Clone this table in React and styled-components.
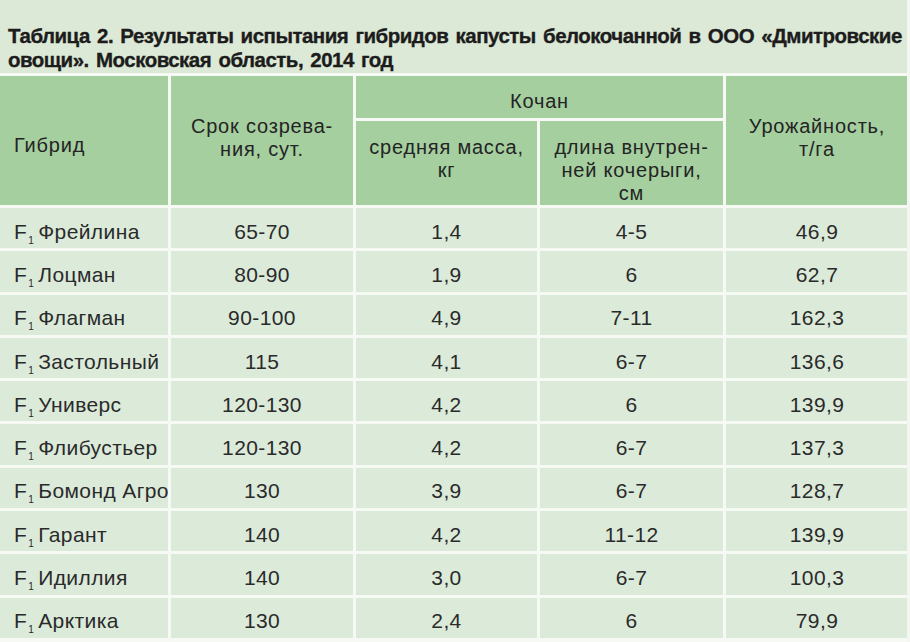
import React, { useLayoutEffect, useRef, useState } from "react";
import styled, { createGlobalStyle } from "styled-components";

const GlobalStyle = createGlobalStyle`
  html, body {
    margin: 0;
    padding: 0;
    background: #f3f6f1;
  }
  body {
    font-family: "Liberation Sans", Arial, Helvetica, sans-serif;
  }
`;

const Page = styled.div`
  width: 907px;
  height: 642px;
  background: #f7f9f5;
  overflow: hidden;
`;

const Caption = styled.div`
  height: 73px;
  box-sizing: border-box;
  padding: 24px 0 0 8px;
  background: #dce9d7;
  color: #1c1c1c;
  font-family: "Liberation Sans", Arial, sans-serif;
  font-weight: 700;
  font-size: 20.5px;
  line-height: 23.5px;
  letter-spacing: -0.5px;
  word-spacing: 2px;
  -webkit-text-stroke: 0.35px #1c1c1c;
  overflow: hidden;
`;

const CaptionLine = styled.div`
  white-space: nowrap;
  width: max-content;
  transform-origin: 0 0;
`;

const Grid = styled.div`
  display: grid;
  grid-template-columns: 168px 182px 181px 183px 182px;
  grid-template-rows: 42px 84px;
  grid-auto-rows: 40.3px;
  gap: 3px;
  margin-top: 3px;
  background: #f7f9f5;
`;

const HeadCell = styled.div`
  background: #a6cfa0;
  color: #242424;
  font-size: 20px;
  line-height: 23px;
  letter-spacing: 0.8px;
  display: flex;
  flex-direction: column;
  align-items: ${(p) => (p.$left ? "flex-start" : "center")};
  justify-content: ${(p) => (p.$top ? "flex-start" : "center")};
  text-align: ${(p) => (p.$left ? "left" : "center")};
  padding: ${(p) => p.$pad || "0 2px"};
  box-sizing: border-box;
  white-space: nowrap;
  grid-column: ${(p) => p.$col || "auto"};
  grid-row: ${(p) => p.$row || "auto"};
`;

const Cell = styled.div`
  background: #dceada;
  color: #2a2a2a;
  font-size: 21px;
  letter-spacing: 0.4px;
  display: flex;
  align-items: center;
  justify-content: ${(p) => (p.$left ? "flex-start" : "center")};
  padding-left: ${(p) => (p.$left ? "14px" : "0")};
  padding-top: 7px;
  box-sizing: border-box;
  white-space: nowrap;
`;

const Sub = styled.sub`
  font-size: 10px;
  vertical-align: -5px;
  line-height: 0;
  margin: 0 4px 0 1px;
`;

const rows = [
  ["Фрейлина", "65-70", "1,4", "4-5", "46,9"],
  ["Лоцман", "80-90", "1,9", "6", "62,7"],
  ["Флагман", "90-100", "4,9", "7-11", "162,3"],
  ["Застольный", "115", "4,1", "6-7", "136,6"],
  ["Универс", "120-130", "4,2", "6", "139,9"],
  ["Флибустьер", "120-130", "4,2", "6-7", "137,3"],
  ["Бомонд Агро", "130", "3,9", "6-7", "128,7"],
  ["Гарант", "140", "4,2", "11-12", "139,9"],
  ["Идиллия", "140", "3,0", "6-7", "100,3"],
  ["Арктика", "130", "2,4", "6", "79,9"],
];

function Title() {
  const first = useRef(null);
  const [scale, setScale] = useState(1);

  useLayoutEffect(() => {
    if (first.current) {
      const w = first.current.offsetWidth;
      if (w) setScale(894 / w);
    }
  }, []);

  const style = { transform: `scaleX(${scale})` };

  return (
    <Caption>
      <CaptionLine ref={first} style={style}>
        Таблица 2. Результаты испытания гибридов капусты белокочанной в ООО «Дмитровские
      </CaptionLine>
      <CaptionLine style={style}>овощи». Московская область, 2014 год</CaptionLine>
    </Caption>
  );
}

export default function App() {
  return (
    <Page>
      <GlobalStyle />
      <Title />
      <Grid>
        <HeadCell $left $col="1" $row="1 / span 2" $pad="10px 0 0 14px">
          Гибрид
        </HeadCell>
        <HeadCell $col="2" $row="1 / span 2" $pad="0 2px 6px">
          <span>Срок созрева-</span>
          <span>ния, сут.</span>
        </HeadCell>
        <HeadCell $col="3 / span 2" $row="1" $pad="9px 2px 0">
          Кочан
        </HeadCell>
        <HeadCell $col="5" $row="1 / span 2" $pad="0 2px 6px">
          <span>Урожайность,</span>
          <span>т/га</span>
        </HeadCell>
        <HeadCell $top $col="3" $row="2" $pad="15px 2px 0">
          <span>средняя масса,</span>
          <span>кг</span>
        </HeadCell>
        <HeadCell $top $col="4" $row="2" $pad="15px 2px 0">
          <span>длина внутрен-</span>
          <span>ней кочерыги,</span>
          <span>см</span>
        </HeadCell>
        {rows.map(([name, ...vals]) => (
          <React.Fragment key={name}>
            <Cell $left>
              <span>
                F<Sub>1</Sub>
                {name}
              </span>
            </Cell>
            {vals.map((v, i) => (
              <Cell key={i}>{v}</Cell>
            ))}
          </React.Fragment>
        ))}
      </Grid>
    </Page>
  );
}
